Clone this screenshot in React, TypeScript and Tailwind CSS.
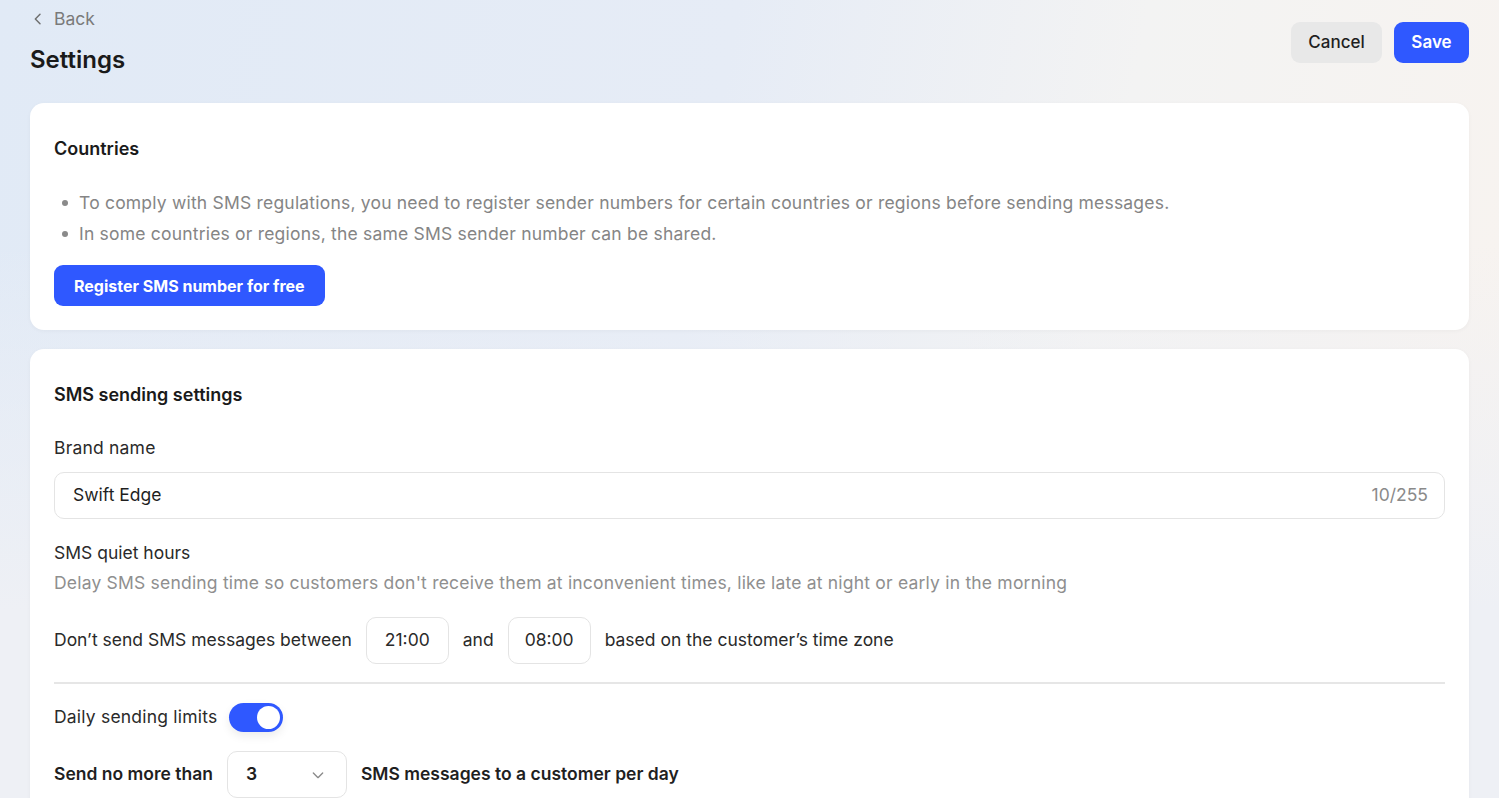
import React from "react";

const font = { fontFamily: "Inter, 'Noto Sans', sans-serif" };

export default function App() {
  return (
    <div
      className="min-h-[798px] w-full bg-[#eef0f5] bg-[linear-gradient(180deg,rgba(238,240,245,0)_0%,rgba(238,240,245,0)_30%,#eef0f5_75%),linear-gradient(100deg,#e1eaf6_0%,#e6ecf6_45%,#f3f3f3_70%,#f8f3ef_100%)] text-[#1f1f1f]"
      style={font}
    >
      <div className="px-[30px] pt-[7px]">
        <div className="flex items-start justify-between">
          <div>
            <div className="flex items-center gap-[8px] text-[17.5px] text-[#7a7a7a] h-[24px]">
              <svg width="16" height="16" viewBox="0 0 24 24" fill="none" stroke="#6f6f6f" strokeWidth="2.2" strokeLinecap="round" strokeLinejoin="round">
                <path d="M15 5l-7 7 7 7" />
              </svg>
              <span>Back</span>
            </div>
            <h1 className="mt-[13px] text-[24px] font-semibold leading-[32px] text-[#1a1a1a]">Settings</h1>
          </div>
          <div className="flex gap-[12px] pt-[15px]">
            <button className="h-[41px] w-[91px] rounded-[9px] bg-[#e8e8e8] text-[17px] font-medium text-[#1f1f1f]">Cancel</button>
            <button className="h-[41px] w-[75px] rounded-[9px] bg-[#2f58ff] text-[17px] font-semibold text-white">Save</button>
          </div>
        </div>

        <div className="mt-[27px] rounded-[14px] bg-white px-[24px] pt-[34px] pb-[24px] shadow-[0_1px_4px_rgba(0,0,0,0.04)]">
          <h2 className="text-[18px] font-semibold leading-[24px] text-[#1a1a1a]">Countries</h2>
          <ul className="mt-[30px] flex flex-col gap-[7px] text-[17.5px] tracking-[0.2px] leading-[24px] text-[#858585]">
            <li className="flex items-center">
              <span className="mx-[8px] h-[6px] w-[6px] rounded-full bg-[#8a8a8a]" />
              <span className="ml-[3px]">To comply with SMS regulations, you need to register sender numbers for certain countries or regions before sending messages.</span>
            </li>
            <li className="flex items-center">
              <span className="mx-[8px] h-[6px] w-[6px] rounded-full bg-[#8a8a8a]" />
              <span className="ml-[3px]">In some countries or regions, the same SMS sender number can be shared.</span>
            </li>
          </ul>
          <button className="mt-[19px] h-[41px] rounded-[9px] bg-[#2f58ff] px-[20px] text-[16px] font-bold text-white">Register SMS number for free</button>
        </div>

        <div className="mt-[19px] rounded-t-[14px] bg-white px-[24px] pt-[34px] pb-[16px] shadow-[0_1px_4px_rgba(0,0,0,0.04)]">
          <h2 className="text-[18px] font-semibold leading-[24px] text-[#1a1a1a]">SMS sending settings</h2>
          <div className="mt-[30px] text-[17.5px] tracking-[0.2px] leading-[22px] text-[#2a2a2a]">Brand name</div>
          <div className="mt-[13px] flex h-[47px] items-center justify-between rounded-[10px] border border-[#e4e4e4] pl-[18px] pr-[16px] text-[17.5px]">
            <span className="text-[#1f1f1f]">Swift Edge</span>
            <span className="text-[#8a8a8a]">10/255</span>
          </div>
          <div className="mt-[23px] text-[17.5px] leading-[22px] text-[#2a2a2a]">SMS quiet hours</div>
          <div className="mt-[8px] text-[17.5px] tracking-[0.2px] leading-[22px] text-[#8f8f8f]">Delay SMS sending time so customers don't receive them at inconvenient times, like late at night or early in the morning</div>
          <div className="mt-[23px] flex items-center gap-[14px] text-[17.5px] text-[#2a2a2a]">
            <span>Don’t send SMS messages between</span>
            <div className="flex h-[47px] w-[83px] items-center justify-center rounded-[10px] border border-[#e4e4e4]">21:00</div>
            <span>and</span>
            <div className="flex h-[47px] w-[83px] items-center justify-center rounded-[10px] border border-[#e4e4e4]">08:00</div>
            <span>based on the customer’s time zone</span>
          </div>
          <div className="mt-[18px] h-[2px] bg-[#e6e6e6]" />
          <div className="mt-[19px] flex items-center gap-[12px] text-[17.5px] tracking-[0.2px] text-[#2a2a2a]">
            <span>Daily sending limits</span>
            <div className="flex h-[29px] w-[54px] items-center justify-end rounded-full bg-[#2f58ff] pr-[3px] shadow-[0_4px_10px_rgba(0,0,0,0.08)]">
              <div className="h-[23px] w-[23px] rounded-full bg-white" />
            </div>
          </div>
          <div className="mt-[19px] flex items-center gap-[14px] text-[17.5px] font-semibold text-[#1f1f1f]">
            <span>Send no more than</span>
            <div className="flex h-[47px] w-[120px] items-center justify-between rounded-[10px] border border-[#e4e4e4] pl-[18px] pr-[20px]">
              <span>3</span>
              <svg width="16" height="16" viewBox="0 0 24 24" fill="none" stroke="#8a8a8a" strokeWidth="2" strokeLinecap="round" strokeLinejoin="round">
                <path d="M5 9l7 7 7-7" />
              </svg>
            </div>
            <span>SMS messages to a customer per day</span>
          </div>
        </div>
      </div>
    </div>
  );
}
